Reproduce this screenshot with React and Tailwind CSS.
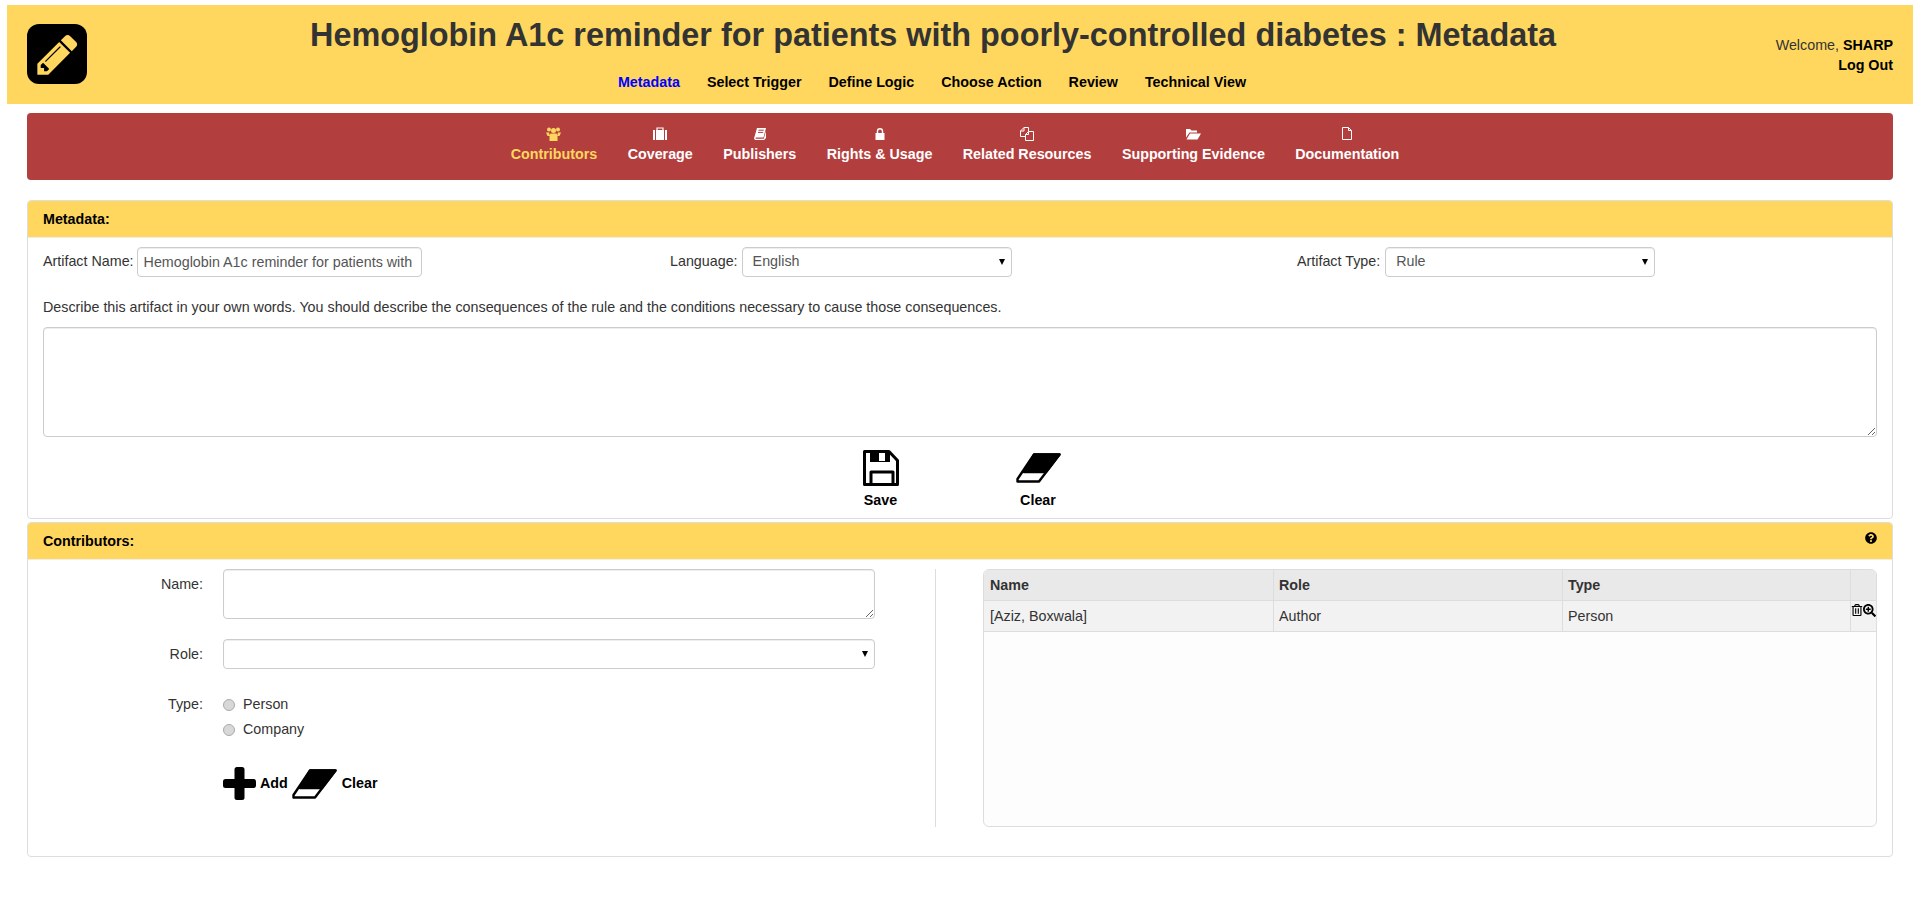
import { FaQuestionCircle, FaRegTrashAlt, FaSearchPlus } from 'react-icons/fa';

const topLinks = ['Metadata', 'Select Trigger', 'Define Logic', 'Choose Action', 'Review', 'Technical View'];

function UsersIcon() {
  return (
    <svg width="15" height="14" viewBox="0 0 15 14" fill="currentColor">
      <circle cx="3" cy="2.5" r="2" />
      <circle cx="12" cy="2.5" r="2" />
      <circle cx="7.5" cy="3.5" r="2.5" />
      <path d="M0 5.5H3L4 9H1.5ZM15 5.5H12L11 9H13.5ZM4.5 6.5H10.5L11.5 9V14H3.5V9Z" />
    </svg>
  );
}

function BriefcaseIcon() {
  return (
    <svg width="14" height="14" viewBox="0 0 14 14">
      <path d="M4 3V1H10V3" fill="none" stroke="currentColor" strokeWidth="1.2" />
      <path d="M0 3H2V13H0ZM3 3H11V13H3ZM12 3H14V13H12Z" fill="currentColor" />
    </svg>
  );
}

function BookIcon() {
  return (
    <svg width="14" height="14" viewBox="0 0 14 14" fill="currentColor">
      <path d="M4 1H13L10.5 10.5H3L2.4 11.8H10.8L13 4V11L11 13H2L1 11.5Z" />
      <path d="M5.5 3.2H10.8M5 5.4H10.2" stroke="#b33e3e" strokeWidth="1" />
    </svg>
  );
}

function LockIcon() {
  return (
    <svg width="14" height="14" viewBox="0 0 14 14">
      <path d="M4.5 6V4.2A2.5 2.5 0 0 1 9.5 4.2V6" fill="none" stroke="currentColor" strokeWidth="1.4" />
      <rect x="2.5" y="6" width="9" height="7" rx="0.5" fill="currentColor" />
    </svg>
  );
}

function CopyIcon() {
  return (
    <svg width="14" height="14" viewBox="0 0 14 14" fill="none" stroke="currentColor" strokeWidth="1">
      <path d="M5.5 9.5H0.5V4L4 0.5H8.5V4" />
      <path d="M4 0.5V4H0.5" />
      <path d="M13.5 13.5H5.5V7.5L8.5 4.5H13.5Z" />
      <path d="M8.5 4.5V7.5H5.5" />
    </svg>
  );
}

function FolderIcon() {
  return (
    <svg width="15" height="14" viewBox="0 0 15 14" fill="currentColor">
      <path d="M0 2H4L5.5 3.5H11V5.5H3.5L0 10.5Z" />
      <path d="M4 6.5H15L11.5 12.5H0.5Z" />
    </svg>
  );
}

function FileIcon() {
  return (
    <svg width="14" height="14" viewBox="0 0 14 14" fill="none" stroke="currentColor" strokeWidth="1">
      <path d="M2.5 0.5H8.5L11.5 3.5V12.5H2.5Z" />
      <path d="M8.5 0.5V3.5H11.5" />
    </svg>
  );
}

const tabs = [
  { icon: UsersIcon, label: 'Contributors', active: true },
  { icon: BriefcaseIcon, label: 'Coverage' },
  { icon: BookIcon, label: 'Publishers' },
  { icon: LockIcon, label: 'Rights & Usage' },
  { icon: CopyIcon, label: 'Related Resources' },
  { icon: FolderIcon, label: 'Supporting Evidence' },
  { icon: FileIcon, label: 'Documentation' },
];

function PencilIcon() {
  return (
    <svg width="47" height="47" viewBox="0 0 1792 1792" fill="#ffd75e">
      <path d="M491 1536l91-91-235-235-91 91v107h128v128h107zm523-928q0-22-22-22-10 0-17 7l-542 542q-7 7-7 17 0 22 22 22 10 0 17-7l542-542q7-7 7-17zm-54-192l416 416-832 832h-416v-416zm683 96q0 53-37 90l-166 166-416-416 166-165q36-38 90-38 53 0 91 38l235 234q37 39 37 91z" />
    </svg>
  );
}

function SaveIcon() {
  return (
    <svg width="36" height="36" viewBox="0 0 36 36" fill="none" stroke="#000" strokeWidth="3" strokeLinejoin="round">
      <path d="M1.5 1.5H26L34.5 10.5V34.5H1.5Z" />
      <path d="M7 1.5H27V12H7Z" fill="#000" stroke="none" />
      <path d="M16 3H22V11H16Z" fill="#fff" stroke="none" />
      <path d="M8 34.5V22H30V34.5" />
    </svg>
  );
}

function EraserIcon({ className }) {
  return (
    <svg className={className} viewBox="0 0 45 30" fill="none" stroke="#000" strokeWidth="2.4" strokeLinejoin="round">
      <path d="M18 1.5H43.5L23 28.5H1.5V26Z" fill="#fff" />
      <path d="M18 1.5H43.5L30 19H8Z" fill="#000" />
    </svg>
  );
}

function PlusIcon() {
  return (
    <svg width="33" height="33" viewBox="0 0 33 33" fill="#000">
      <rect x="11.5" y="0" width="10" height="33" rx="2.5" />
      <rect x="0" y="12" width="33" height="9" rx="2.5" />
    </svg>
  );
}

const fieldClass = 'bg-white border border-[#ccc] rounded px-[6px] text-[#555] shadow-[inset_0_1px_1px_rgba(0,0,0,0.075)]';

function Select({ value, className }) {
  return (
    <div className={`relative ${className}`}>
      <select defaultValue={value} className={`appearance-none w-full h-full ${fieldClass} pl-[10px]`}>
        <option>{value}</option>
      </select>
      <span className="absolute right-[7px] top-[12px] w-0 h-0 border-x-[3.5px] border-x-transparent border-t-[6px] border-t-black pointer-events-none" />
    </div>
  );
}

function PanelHeader({ title, help }) {
  return (
    <div className="h-[37px] bg-[#ffd75e] px-[15px] pt-[2px] flex items-center justify-between border-b border-[#eee]">
      <b className="text-black">{title}</b>
      {help && <FaQuestionCircle className="text-black mb-[8px]" size={12} />}
    </div>
  );
}

export default function App() {
  return (
    <div className="min-h-[900px] bg-white text-[14.3px] text-[#333] font-['Liberation_Sans',Arial,sans-serif]">
      <div className="pt-[5px] px-[7px]">
        <header className="h-[99px] bg-[#ffd75e] flex">
          <div className="w-[179px] pl-[20px] pt-[19px]">
            <div className="w-[60px] h-[60px] bg-black rounded-[12px] flex items-center justify-center">
              <PencilIcon />
            </div>
          </div>
          <div className="flex-1 text-center">
            <h1 className="text-[32.4px] leading-[35px] font-bold text-[#333] mt-[13px]">Hemoglobin A1c reminder for patients with poorly-controlled diabetes : Metadata</h1>
            <nav className="flex justify-center gap-[27px] mt-[19px] pr-[2px] font-bold">
              {topLinks.map((link, i) => (
                <span key={link} className={i === 0 ? 'text-[#0000ff]' : 'text-black'}>{link}</span>
              ))}
            </nav>
          </div>
          <div className="w-[233px] text-right pr-[20px] pt-[30px] leading-[20px]">
            <div>Welcome, <b className="text-black">SHARP</b></div>
            <b className="text-black">Log Out</b>
          </div>
        </header>
      </div>

      <div className="px-[27px]">
        <div className="mt-[9px] h-[67px] bg-[#b33e3e] rounded flex justify-center gap-[30.4px] pt-[14px] pr-[10px] font-bold text-white">
          {tabs.map(({ icon: Icon, label, active }) => (
            <div key={label} className={`flex flex-col items-center ${active ? 'text-[#ffd75e]' : ''}`}>
              <Icon />
              <span className="mt-[3px] leading-[20px]">{label}</span>
            </div>
          ))}
        </div>

        <section className="mt-[20px] h-[319px] border border-[#ddd] rounded overflow-hidden">
          <PanelHeader title="Metadata:" />
          <div className="px-[15px] pt-[9px]">
            <div className="grid grid-cols-[627px_627px_1fr]">
              <div className="flex items-center gap-[3px]">
                <span>Artifact Name:</span>
                <input readOnly value="Hemoglobin A1c reminder for patients with poorly-controlled diabetes" className={`w-[285px] h-[30px] ${fieldClass}`} />
              </div>
              <div className="flex items-center gap-[4px]">
                <span>Language:</span>
                <Select value="English" className="w-[270px] h-[30px]" />
              </div>
              <div className="flex items-center gap-[5px]">
                <span>Artifact Type:</span>
                <Select value="Rule" className="w-[270px] h-[30px]" />
              </div>
            </div>
            <p className="mt-[20px] leading-[20px]">Describe this artifact in your own words. You should describe the consequences of the rule and the conditions necessary to cause those consequences.</p>
            <textarea className={`mt-[10px] block w-full h-[110px] ${fieldClass}`} />
            <div className="flex justify-center gap-[117px] mt-[13px] ml-[3px] font-bold text-black">
              <div className="flex flex-col items-center">
                <SaveIcon />
                <span className="mt-[4px]">Save</span>
              </div>
              <div className="flex flex-col items-center">
                <EraserIcon className="w-[45px] h-[30px] mt-[3px]" />
                <span className="mt-[7px]">Clear</span>
              </div>
            </div>
          </div>
        </section>

        <section className="mt-[3px] h-[335px] border border-[#ddd] rounded overflow-hidden">
          <PanelHeader title="Contributors:" help />
          <div className="flex pt-[9px] pl-[15px] pr-[15px]">
            <div className="w-[893px] h-[258px] border-r border-[#ddd] pr-[60px] shrink-0">
              <div className="grid grid-cols-[160px_1fr] gap-x-[20px]">
                <span className="text-right pt-[5px]">Name:</span>
                <textarea className={`block w-full h-[50px] ${fieldClass}`} />
                <span className="text-right mt-[20px] pt-[5px]">Role:</span>
                <Select value="" className="mt-[20px] w-full h-[30px]" />
                <span className="text-right mt-[25px]">Type:</span>
                <div className="mt-[26px] flex flex-col gap-[5px]">
                  {['Person', 'Company'].map((option) => (
                    <div key={option} className="flex items-center gap-[8px] h-[20px]">
                      <span className="w-[12px] h-[12px] rounded-full bg-[#d8d8d8] border border-[#aaa]" />
                      <span>{option}</span>
                    </div>
                  ))}
                </div>
                <div />
                <div className="mt-[27px] flex items-center font-bold text-black">
                  <PlusIcon />
                  <span className="ml-[4px]">Add</span>
                  <EraserIcon className="w-[45px] h-[30px] ml-[4px]" />
                  <span className="ml-[5px]">Clear</span>
                </div>
              </div>
            </div>
            <div className="ml-[47px] flex-1 h-[258px] border border-[#ddd] rounded-md bg-[#fdfdfd] overflow-hidden">
              <div className="grid grid-cols-[290px_289px_288px_1fr] h-[31px] bg-[#e9e9e9] border-b border-[#ddd] font-bold">
                {['Name', 'Role', 'Type', ''].map((h, i) => (
                  <div key={h} className={`px-[5px] border-r border-[#ddd] last:border-r-0 leading-[30px] ${i === 0 ? 'pl-[6px]' : ''}`}>{h}</div>
                ))}
              </div>
              <div className="grid grid-cols-[290px_289px_288px_1fr] h-[31px] bg-[#f2f2f2] border-b border-[#ddd]">
                <div className="pl-[6px] pr-[5px] border-r border-[#ddd] leading-[30px]">[Aziz, Boxwala]</div>
                <div className="px-[5px] border-r border-[#ddd] leading-[30px]">Author</div>
                <div className="px-[5px] border-r border-[#ddd] leading-[30px]">Person</div>
                <div className="flex pt-[3px] text-black">
                  <FaRegTrashAlt size={12} />
                  <FaSearchPlus size={13} />
                </div>
              </div>
            </div>
          </div>
        </section>
      </div>
    </div>
  );
}
